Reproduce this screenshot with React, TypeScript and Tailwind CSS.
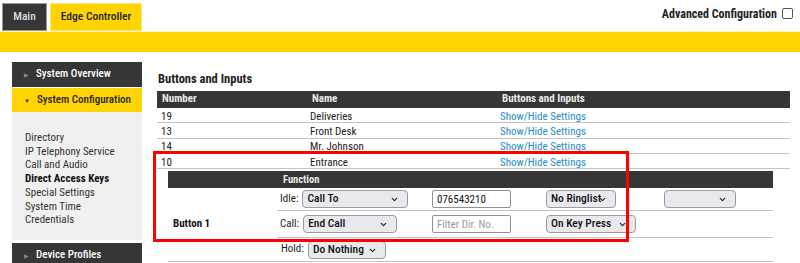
import { ChevronDown } from "lucide-react";

const rows = [
  { no: "19", name: "Deliveries" },
  { no: "13", name: "Front Desk" },
  { no: "14", name: "Mr. Johnson" },
  { no: "10", name: "Entrance" },
];

const links = [
  { label: "Directory" },
  { label: "IP Telephony Service" },
  { label: "Call and Audio" },
  { label: "Direct Access Keys", active: true },
  { label: "Special Settings" },
  { label: "System Time" },
  { label: "Credentials" },
];

const Select = ({ value, width }: { value: string; width: string }) => (
  <div
    className={`relative flex h-[18px] items-center rounded-[4px] border border-[#9a9aa4] bg-[#e9e9ed] pl-[4px] text-[11.5px] font-medium text-[#111] ${width}`}
  >
    <span className="leading-none">{value}</span>
    <ChevronDown className="absolute right-[8px] top-[4px] h-[9px] w-[9px] text-[#222]" strokeWidth={3} />
  </div>
);

const TextInput = ({ value, placeholder }: { value?: string; placeholder?: string }) => (
  <div className="flex h-[18px] w-[79px] items-center rounded-[2px] border border-[#8f8f9d] bg-white pl-[4px] text-[11px] leading-none">
    {value ? <span className="text-[#111]">{value}</span> : <span className="text-[#9a9a9a]">{placeholder}</span>}
  </div>
);

export default function App() {
  return (
    <div className="relative h-[263px] w-[800px] overflow-hidden bg-white font-['Roboto_Condensed',sans-serif] text-[11px] text-[#222]">
      {/* top tabs */}
      <div className="flex h-[31px] items-end">
        <div className="ml-[2px] flex h-[28px] w-[45px] items-center justify-center border border-[#9a9a9a] bg-[#363636] text-[11.5px] font-medium text-[#ddd]">
          Main
        </div>
        <div className="ml-[3px] flex h-[28px] w-[92px] items-center justify-center border border-[#ffe680] bg-[#ffd400] text-[11.5px] font-medium text-[#222]">
          Edge Controller
        </div>
        <div className="ml-auto flex h-full items-start pr-[7px] pt-[5px]">
          <span className="text-[12px] font-bold text-[#222]">Advanced Configuration</span>
          <span className="ml-[5px] mt-[3px] h-[11px] w-[11px] rounded-[2px] border border-[#555] bg-white" />
        </div>
      </div>
      <div className="h-[21px] border-t border-[#fff3b0] bg-[#ffd400]" />

      <div className="flex">
        {/* sidebar */}
        <div className="ml-[12px] mt-[10px] flex w-[130px] flex-col">
          <div className="flex h-[25px] items-center bg-[#363636] pl-[12px] text-[11px] font-medium text-white">
            <span className="mr-[7px] text-[6px] text-[#888]">▶</span>
            System Overview
          </div>
          <div className="mt-[1px] flex h-[24px] items-center bg-[#ffd400] pl-[12px] text-[11px] font-medium text-[#222]">
            <span className="mr-[7px] text-[6px] text-[#333]">▼</span>
            System Configuration
          </div>
          <div className="flex h-[128px] flex-col bg-[#f0f0f0] pl-[13px] pt-[19px] text-[11px] leading-[13.7px] text-[#333]">
            {links.map((l) => (
              <span key={l.label} className={l.active ? "font-bold text-[#111]" : ""}>
                {l.label}
              </span>
            ))}
          </div>
          <div className="mt-[3px] flex h-[25px] items-center bg-[#363636] pl-[12px] text-[11px] font-medium text-white">
            <span className="mr-[7px] text-[6px] text-[#888]">▶</span>
            Device Profiles
          </div>
        </div>

        {/* main */}
        <div className="ml-[15px] mt-[19px] w-[633px]">
          <div className="pl-[1px] text-[12.5px] font-bold leading-[15px] text-[#222]">Buttons and Inputs</div>
          <div className="mt-[5px] grid h-[17px] grid-cols-[150px_190px_1fr] items-center bg-[#363636] text-[11px] font-bold text-[#e8e8e8]">
            <span className="pl-[5px]">Number</span>
            <span className="pl-[5px]">Name</span>
            <span className="pl-[5px]">Buttons and Inputs</span>
          </div>
          {rows.map((r) => (
            <div
              key={r.no}
              className="grid h-[15.3px] grid-cols-[150px_190px_1fr] items-center border-b border-[#c4c4c4] pt-[2px] text-[11px] leading-none"
            >
              <span className="pl-[4px]">{r.no}</span>
              <span className="pl-[3px]">{r.name}</span>
              <span className="pl-[3px] text-[#2b8bc6]">Show/Hide Settings</span>
            </div>
          ))}

          {/* expanded settings */}
          <div className="ml-[11px] mt-[2px] w-[605px]">
            <div className="flex h-[17px] items-center bg-[#363636] text-[10.5px] font-bold text-[#e8e8e8]">
              <span className="w-[109px]" />
              <span className="pl-[6px]">Function</span>
            </div>
            <div className="flex border-b border-[#c4c4c4]">
              <div className="flex w-[109px] items-center pl-[5px] text-[11px] font-bold text-[#111]">Button 1</div>
              <div className="flex flex-1 flex-col text-[11px]">
                <div className="flex h-[23px] items-center border-b border-[#c4c4c4]">
                  <div className="flex w-[151px] items-center pl-[3px]">
                    <span className="mr-[4px]">Idle:</span>
                    <Select value="Call To" width="w-[106px]" />
                  </div>
                  <div className="w-[114px] pl-[4px]">
                    <TextInput value="076543210" />
                  </div>
                  <div className="w-[118px] pl-[4px]">
                    <Select value="No Ringlist" width="w-[70px]" />
                  </div>
                  <div className="pl-[4px]">
                    <Select value="" width="w-[72px]" />
                  </div>
                </div>
                <div className="flex h-[27px] items-center border-b border-[#c4c4c4]">
                  <div className="flex w-[151px] items-center pl-[3px]">
                    <span className="mr-[4px]">Call:</span>
                    <Select value="End Call" width="w-[94px]" />
                  </div>
                  <div className="w-[114px] pl-[4px]">
                    <TextInput placeholder="Filter Dir. No." />
                  </div>
                  <div className="w-[118px] pl-[4px]">
                    <Select value="On Key Press" width="w-[90px]" />
                  </div>
                </div>
                <div className="flex h-[23px] items-center">
                  <div className="flex w-[151px] items-center pl-[4px]">
                    <span className="mr-[4px]">Hold:</span>
                    <Select value="Do Nothing" width="w-[78px]" />
                  </div>
                </div>
              </div>
            </div>
          </div>
        </div>
      </div>

      {/* highlight box */}
      <div className="pointer-events-none absolute left-[153px] top-[151px] h-[91px] w-[476px] border-[3px] border-[#ff0000]" />
    </div>
  );
}
